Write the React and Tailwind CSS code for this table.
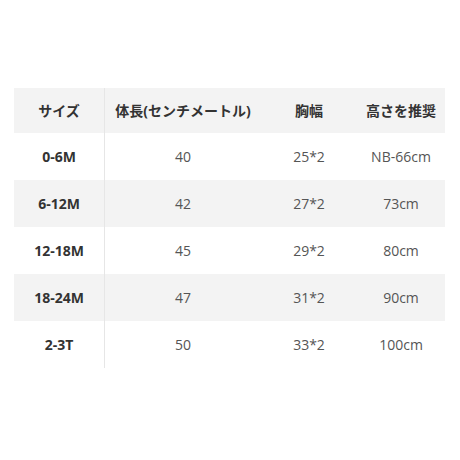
const rows = [
  ["0-6M", "40", "25*2", "NB-66cm"],
  ["6-12M", "42", "27*2", "73cm"],
  ["12-18M", "45", "29*2", "80cm"],
  ["18-24M", "47", "31*2", "90cm"],
  ["2-3T", "50", "33*2", "100cm"],
]

export default function App() {
  return (
    <div className="w-[460px] h-[460px] bg-white pt-[88px] pl-[14px]" style={{ fontFamily: '"Open Sans", "Noto Sans CJK JP", sans-serif' }}>
      <div className="grid grid-cols-[91px_156px_96px_88px] text-[14px]">
        <div className="h-[45px] flex items-center justify-center bg-[#f3f3f3] border-r border-[#e6e6e6] font-bold text-[#333]">サイズ</div>
        <div className="h-[45px] flex items-center justify-center bg-[#f3f3f3] font-bold text-[#333]">体長(センチメートル)</div>
        <div className="h-[45px] flex items-center justify-center bg-[#f3f3f3] font-bold text-[#333]">胸幅</div>
        <div className="h-[45px] flex items-center justify-center bg-[#f3f3f3] font-bold text-[#333]">高さを推奨</div>
        {rows.map((r, i) => {
          const bg = i % 2 === 1 ? "bg-[#f3f3f3]" : "bg-white"
          return [
            <div key={i + "a"} className={"h-[47px] flex items-center justify-center border-r border-[#e6e6e6] font-bold text-[#333] " + bg}>{r[0]}</div>,
            <div key={i + "b"} className={"h-[47px] flex items-center justify-center text-[#555] " + bg}>{r[1]}</div>,
            <div key={i + "c"} className={"h-[47px] flex items-center justify-center text-[#555] " + bg}>{r[2]}</div>,
            <div key={i + "d"} className={"h-[47px] flex items-center justify-center text-[#555] " + bg}>{r[3]}</div>,
          ]
        })}
      </div>
    </div>
  )
}
